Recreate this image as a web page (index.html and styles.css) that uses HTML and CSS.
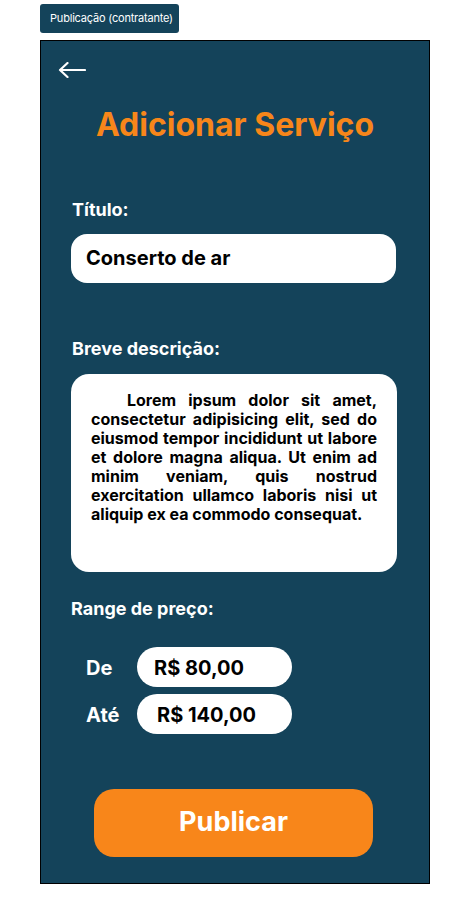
FILE: index.html
```html
<!DOCTYPE html>
<html lang="pt-BR">
<head>
<meta charset="utf-8">
<title>Publicação (contratante)</title>
<link rel="stylesheet" href="styles.css">
</head>
<body>
<div class="tag">Publicação (contratante)</div>
<main class="phone">
  <button class="back" aria-label="Voltar">
    <svg width="28" height="16" viewBox="0 0 28 16" fill="none" stroke="#fff" stroke-width="2.2" stroke-linecap="round" stroke-linejoin="round">
      <path d="M2 8 H27 M9.5 1 L2 8 L9.5 15"/>
    </svg>
  </button>
  <h1 class="title">Adicionar Serviço</h1>

  <section class="field">
    <div class="label">Título:</div>
    <div class="input">Conserto de ar</div>
  </section>

  <section class="field field-desc">
    <div class="label">Breve descrição:</div>
    <div class="textarea">Lorem ipsum dolor sit amet, consectetur adipisicing elit, sed do eiusmod tempor incididunt ut labore et dolore magna aliqua. Ut enim ad minim veniam, quis nostrud exercitation ullamco laboris nisi ut aliquip ex ea commodo consequat.</div>
  </section>

  <section class="field field-range">
    <div class="label label-range">Range de preço:</div>
    <div class="range-row first">
      <span class="range-label">De</span>
      <span class="pill">R$ 80,00</span>
    </div>
    <div class="range-row">
      <span class="range-label">Até</span>
      <span class="pill pill-wide">R$ 140,00</span>
    </div>
  </section>

  <button class="publish">Publicar</button>
</main>
</body>
</html>
```

FILE: styles.css
```css
* { box-sizing: border-box; }

body {
  margin: 0;
  padding-top: 4px;
  background: #ffffff;
  font-family: Inter, "Noto Sans", sans-serif;
}

.tag {
  margin-left: 40px;
  width: 139px;
  height: 29px;
  padding-left: 10px;
  background: #14435a;
  color: #ffffff;
  border-radius: 3px;
  font-size: 11px;
  letter-spacing: -0.2px;
  line-height: 29px;
  white-space: nowrap;
}

.phone {
  display: flex;
  flex-direction: column;
  align-items: flex-start;
  margin-top: 7px;
  margin-left: 40px;
  width: 390px;
  height: 844px;
  background: #14435a;
  border: 1px solid #000000;
}

.back {
  margin: 21px 0 0 17px;
  padding: 0;
  border: 0;
  background: none;
  width: 28px;
  height: 16px;
  display: block;
}

.back svg { display: block; }

.title {
  align-self: stretch;
  margin: 27px 0 0;
  text-align: center;
  color: #f7861a;
  font-size: 32px;
  line-height: 39px;
  font-weight: 700;
}

.field {
  display: flex;
  flex-direction: column;
  align-items: flex-start;
  margin-left: 30px;
}

.label {
  color: #ffffff;
  font-size: 18px;
  line-height: 22px;
  font-weight: 700;
  padding-left: 1px;
  margin-top: 55px;
}

.field-desc .label { margin-top: 55px; }

.input {
  margin-top: 13px;
  width: 325px;
  height: 49px;
  padding-left: 15px;
  background: #ffffff;
  border-radius: 16px;
  color: #000000;
  font-size: 20px;
  line-height: 49px;
  font-weight: 700;
}

.textarea {
  margin-top: 14px;
  width: 326px;
  height: 198px;
  padding: 17px 20px 0 20px;
  background: #ffffff;
  border-radius: 18px;
  color: #000000;
  font-size: 16px;
  line-height: 19px;
  font-weight: 700;
  text-align: justify;
  text-indent: 36px;
}

.field-range .label-range {
  margin-top: 26px;
  padding-left: 0;
}

.range-row {
  display: flex;
  align-items: center;
  margin-top: 7px;
}

.range-row.first { margin-top: 27px; }

.range-label {
  width: 66px;
  padding: 2px 0 0 15px;
  color: #ffffff;
  font-size: 20px;
  font-weight: 700;
}

.pill {
  width: 155px;
  height: 40px;
  padding: 3px 0 0 17px;
  background: #ffffff;
  border-radius: 20px;
  color: #000000;
  font-size: 20px;
  line-height: 37px;
  font-weight: 700;
}

.pill-wide { padding-left: 20px; }

.publish {
  margin: 55px 0 0 53px;
  width: 279px;
  height: 68px;
  padding: 0 0 3px;
  border: 0;
  border-radius: 20px;
  background: #f8861a;
  color: #ffffff;
  font-family: Inter, "Noto Sans", sans-serif;
  font-size: 27px;
  line-height: 65px;
  font-weight: 700;
}
```
